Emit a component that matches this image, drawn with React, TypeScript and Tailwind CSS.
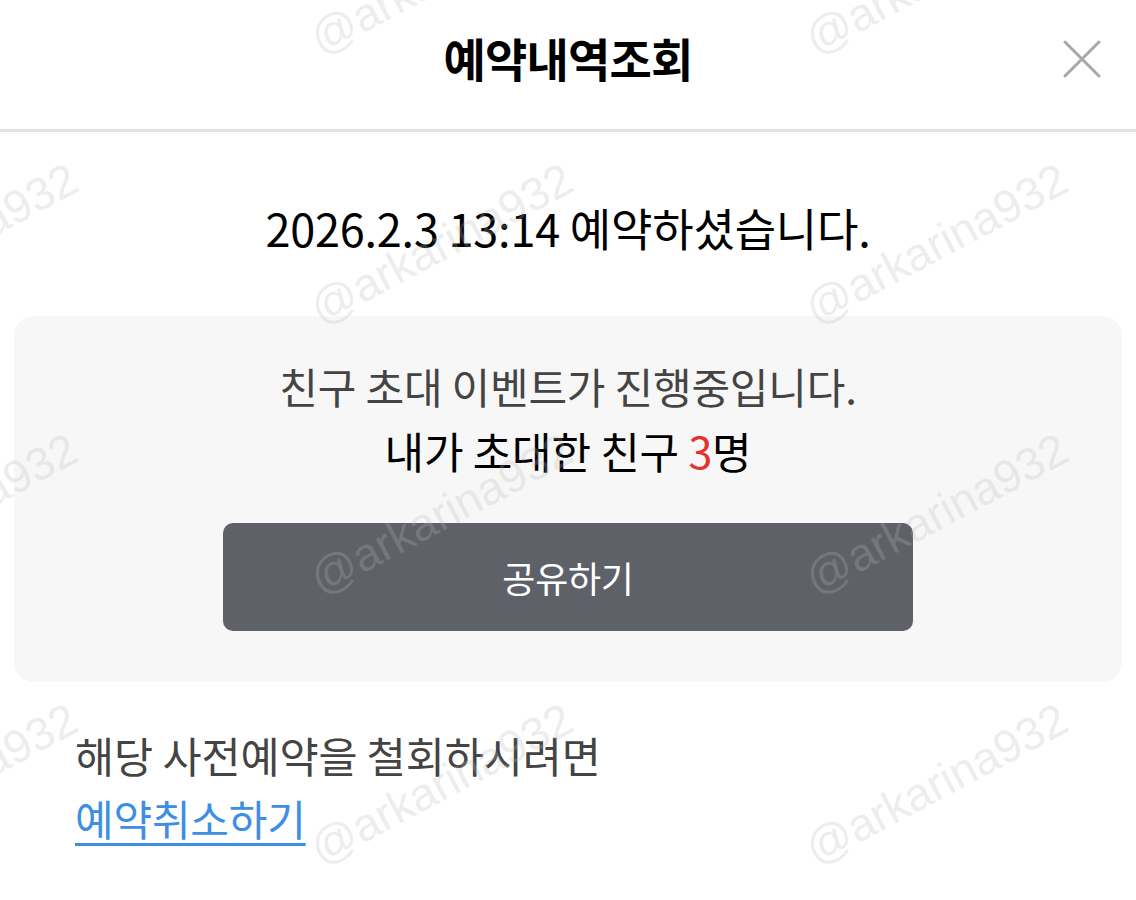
import React from "react";

const marks: { left: number; top: number }[] = [];
for (let r = 0; r < 4; r++) {
  for (const x of [-171, 324, 819]) {
    marks.push({ left: x, top: 62 + r * 270 - 46 });
  }
}

export default function App() {
  return (
    <div
      className="relative w-[1136px] h-[900px] overflow-hidden bg-white"
      style={{ fontFamily: '"Noto Sans CJK KR", "Noto Sans", sans-serif' }}
    >
      <header className="relative h-[132px] flex items-center justify-center border-b-[3px] border-[#e2e2e2]">
        <h1 className="text-[46px] font-bold text-black tracking-[-0.8px] leading-none pb-[15px]">예약내역조회</h1>
        <button className="absolute right-[35px] top-[40px] w-[38px] h-[38px] flex items-center justify-center">
          <svg width="38" height="38" viewBox="0 0 38 38">
            <path d="M2 2 L36 36 M36 2 L2 36" stroke="#a8a8a8" strokeWidth="3" strokeLinecap="round" />
          </svg>
        </button>
      </header>

      <p className="mt-[73px] text-center text-[45px] text-black leading-none tracking-[-0.2px]">
        2026.2.3 13:14 예약하셨습니다.
      </p>

      <section className="mx-[14px] mt-[66px] h-[366px] rounded-[20px] bg-[#f7f7f7] flex flex-col items-center pt-[49px]">
        <p className="text-[42px] text-[#444] leading-none tracking-[-0.2px]">친구 초대 이벤트가 진행중입니다.</p>
        <p className="mt-[22px] text-[43px] text-black leading-none tracking-[-0.2px]">
          내가 초대한 친구 <span className="text-[#e2342b]">3</span>명
        </p>
        <button className="mt-[51px] w-[690px] h-[108px] rounded-[10px] bg-[#5e6168] text-white text-[36px] tracking-[-0.3px] flex items-center justify-center">
          공유하기
        </button>
      </section>

      <div className="px-[75px] mt-[52px] flex flex-col items-start">
        <p className="text-[42.5px] text-[#444] leading-none tracking-[-0.1px]">해당 사전예약을 철회하시려면</p>
        <a className="mt-[20px] text-[42px] text-[#3d8ee4] underline underline-offset-[7px] decoration-[3px] leading-none tracking-[-0.2px]">
          예약취소하기
        </a>
      </div>

      {marks.map((m, i) => (
        <span
          key={i}
          className="absolute pointer-events-none select-none text-[46px] leading-none text-[rgba(185,185,185,0.26)] whitespace-nowrap origin-bottom-left -rotate-[28deg]"
          style={{ left: m.left, top: m.top, fontFamily: '"Liberation Sans", Arial, sans-serif' }}
        >
          @arkarina932
        </span>
      ))}
    </div>
  );
}
